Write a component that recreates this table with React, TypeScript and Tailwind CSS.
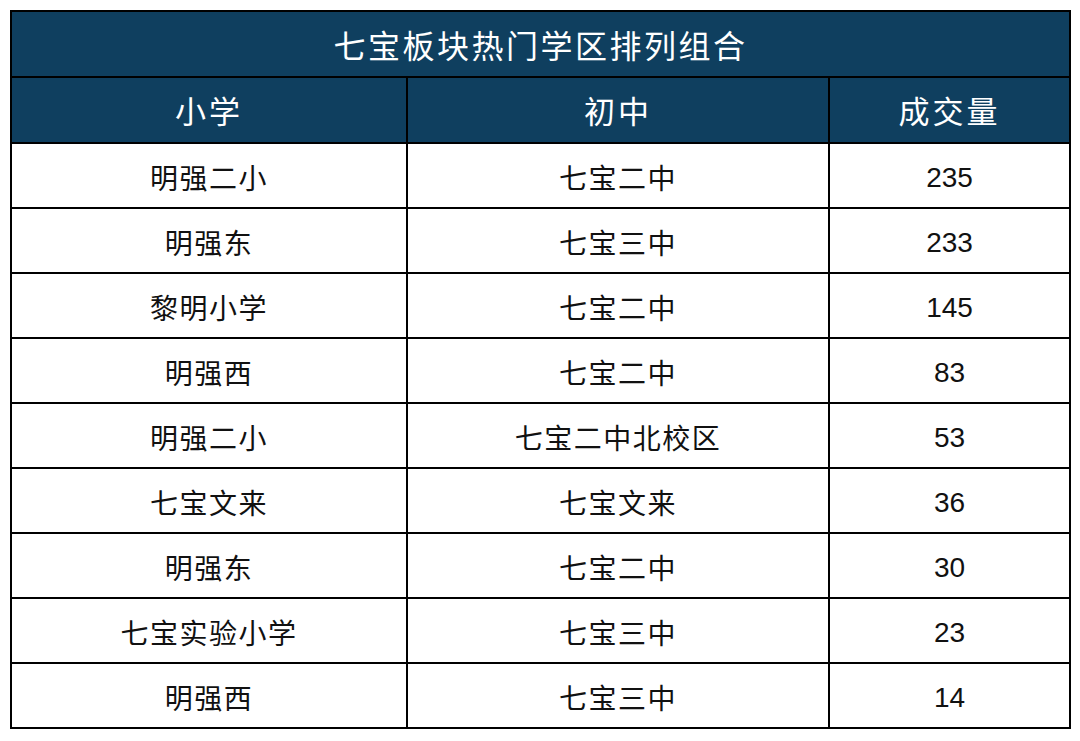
import * as React from "react";

const rows: [string, string, string][] = [
  ["明强二小", "七宝二中", "235"],
  ["明强东", "七宝三中", "233"],
  ["黎明小学", "七宝二中", "145"],
  ["明强西", "七宝二中", "83"],
  ["明强二小", "七宝二中北校区", "53"],
  ["七宝文来", "七宝文来", "36"],
  ["明强东", "七宝二中", "30"],
  ["七宝实验小学", "七宝三中", "23"],
  ["明强西", "七宝三中", "14"],
];

const cjk = "font-['Noto_Sans_CJK_SC',sans-serif]";

export default function App() {
  return (
    <div className="min-h-[741px] w-[1080px] bg-white pl-[10px] pt-[10px]">
      <table className="w-[1059px] table-fixed border-collapse border-2 border-black">
        <colgroup>
          <col className="w-[396px]" />
          <col className="w-[422px]" />
          <col className="w-[241px]" />
        </colgroup>
        <thead>
          <tr className="h-[66px] bg-[#0f3f5f]">
            <th
              colSpan={3}
              className={`border-2 border-black p-0 text-center text-[32px] font-normal tracking-[2.5px] text-white ${cjk}`}
            >
              七宝板块热门学区排列组合
            </th>
          </tr>
          <tr className="h-[66px] bg-[#0f3f5f]">
            {["小学", "初中", "成交量"].map((h) => (
              <th
                key={h}
                className={`border-2 border-black p-0 text-center text-[31px] font-normal tracking-[3px] text-white ${cjk}`}
              >
                {h}
              </th>
            ))}
          </tr>
        </thead>
        <tbody>
          {rows.map((r, i) => (
            <tr key={i} className="h-[65px]">
              <td className={`border-2 border-black p-0 pt-[2px] text-center text-[28px] tracking-[1.5px] text-[#111] ${cjk}`}>
                {r[0]}
              </td>
              <td className={`border-2 border-black p-0 pt-[2px] text-center text-[28px] tracking-[1.5px] text-[#111] ${cjk}`}>
                {r[1]}
              </td>
              <td className="border-2 border-black p-0 pt-[5px] text-center font-['Liberation_Sans',Arial,sans-serif] text-[28px] text-[#111]">
                {r[2]}
              </td>
            </tr>
          ))}
        </tbody>
      </table>
    </div>
  );
}
